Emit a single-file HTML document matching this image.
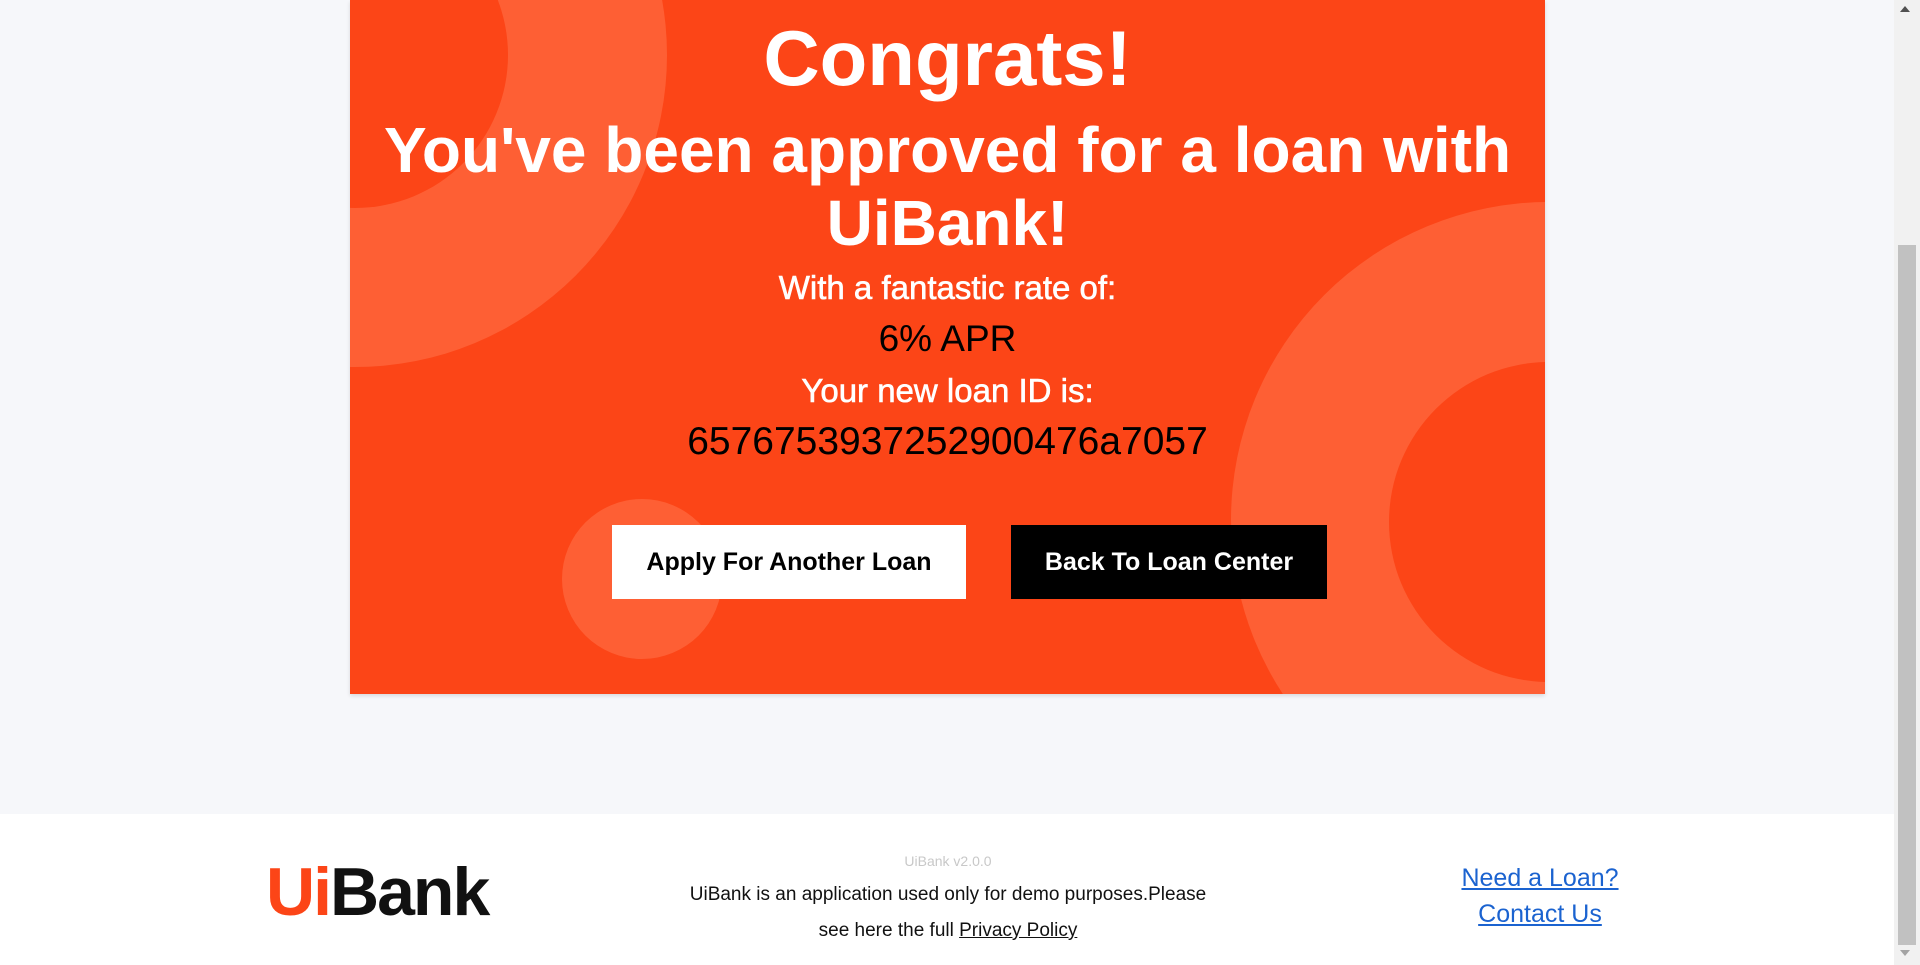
<!DOCTYPE html>
<html><head><meta charset="utf-8"><style>
html,body{margin:0;padding:0;width:1920px;height:965px;overflow:hidden;background:#f6f7fa;font-family:"Liberation Sans",sans-serif}
.card{position:absolute;left:350px;top:0;width:1195px;height:694px;background:#fc4517;overflow:hidden;box-shadow:0 2px 4px rgba(0,0,0,.12)}
.ring{position:absolute;border-radius:50%}
.t{position:absolute;left:0;width:1195px;text-align:center;color:#fff}
.btn{position:absolute;top:525px;height:74px;line-height:74px;text-align:center;font-weight:bold;font-size:25px}
.footer{position:absolute;left:0;top:814px;width:1894px;height:151px;background:#fff}
.sb{position:absolute;left:1894px;top:0;width:26px;height:965px;background:#f1f1f1}
.thumb{position:absolute;left:1898px;top:245px;width:18px;height:700px;background:#c1c1c1}
</style></head><body>
<div class="card">
  <div class="ring" style="left:-307px;top:-257px;width:624px;height:624px;background:#fe5f34"></div>
  <div class="ring" style="left:-148px;top:-98px;width:306px;height:306px;background:#fc4517"></div>
  <div class="ring" style="left:881px;top:202px;width:636px;height:636px;background:#fe5f34"></div>
  <div class="ring" style="left:1039px;top:362px;width:320px;height:320px;background:#fc4517"></div>
  <div class="ring" style="left:212px;top:499px;width:160px;height:160px;background:#fe5f34"></div>
  <div class="t" style="top:18px;font-size:78px;font-weight:bold;line-height:80px">Congrats!</div>
  <div class="t" style="top:114px;font-size:64px;font-weight:bold;line-height:73px;left:10px;width:1175px">You've been approved for a loan with UiBank!</div>
  <div class="t" style="top:270px;font-size:33px;line-height:36px;-webkit-text-stroke:0.6px #fff">With a fantastic rate of:</div>
  <div class="t" style="top:319px;font-size:37px;line-height:40px;color:#000">6% APR</div>
  <div class="t" style="top:373px;font-size:33px;line-height:36px;-webkit-text-stroke:0.6px #fff">Your new loan ID is:</div>
  <div class="t" style="top:421px;font-size:39px;line-height:42px;color:#000">6576753937252900476a7057</div>
  <div class="btn" style="left:262px;width:354px;background:#fff;color:#000">Apply For Another Loan</div>
  <div class="btn" style="left:661px;width:316px;background:#000;color:#fff">Back To Loan Center</div>
</div>
<div class="footer">
  <div style="position:absolute;left:266px;top:38px;font-size:68px;font-weight:bold;letter-spacing:-2px;line-height:80px"><span style="color:#fc4517">Ui</span><span style="color:#111">Bank</span></div>
  <div style="position:absolute;left:648px;width:600px;text-align:center;top:39px;font-size:14px;color:#c8c8c8">UiBank v2.0.0</div>
  <div style="position:absolute;left:598px;width:700px;text-align:center;top:63px;font-size:19px;line-height:36px;color:#111">UiBank is an application used only for demo purposes.Please<br>see here the full <u>Privacy Policy</u></div>
  <div style="position:absolute;left:1390px;width:300px;text-align:center;top:46px;font-size:25px;line-height:36px;color:#1b63d0"><u>Need a Loan?</u><br><u>Contact Us</u></div>
</div>
<div class="sb"></div><div class="thumb"></div>
<div style="position:absolute;left:1900px;top:6px;width:0;height:0;border-left:5px solid transparent;border-right:5px solid transparent;border-bottom:6px solid #505050"></div>
<div style="position:absolute;left:1900px;top:950px;width:0;height:0;border-left:5px solid transparent;border-right:5px solid transparent;border-top:6px solid #a3a3a3"></div>
</body></html>
